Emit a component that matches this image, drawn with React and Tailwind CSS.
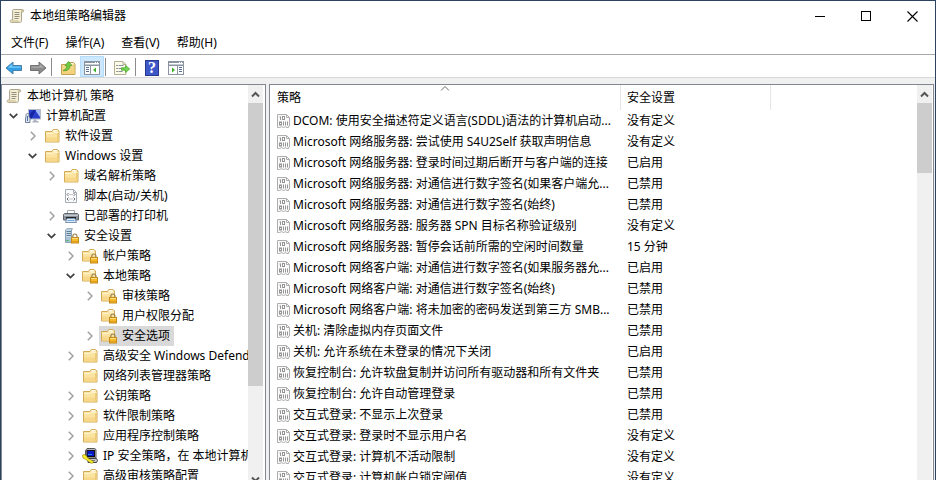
import React from 'react';

const svgBase = 'block shrink-0';

function Scroll() {
  return (
    <svg className={svgBase} width="16" height="16" viewBox="0 0 16 16" aria-hidden="true">
      <path d="M4.500 1.500h9c1.600 0 1.600 2.600 0 2.600h-1v8.400c0 1.200-.6 2-1.800 2H2.400c-1.600 0-1.600-2.600 0-2.600h1.200V3c0-.9.3-1.500.9-1.500z" fill="#f5efd8" stroke="#a9a188" />
      <path d="M11.900 1.800v2.300h1.800c1.200 0 1.200-2.300-.2-2.300z" fill="#cfc4a0" />
      <path d="M2.400 12h7.200c.2 1 .5 1.800 1.200 2.300H2.400c-1.300 0-1.300-2.300 0-2.300z" fill="#ddd2ae" />
      <path d="M5.500 4.500h5M5.500 6.500h5M5.500 8.500h5M5.500 10.500h4" stroke="#938e7c" />
    </svg>
  );
}

function Lock() {
  return (
    <>
      <path d="M9.800 10V8.300a2.100 2.300 0 0 1 4.200 0V10" fill="none" stroke="#9a8350" strokeWidth="1.200" />
      <rect x="8.500" y="9.500" width="7" height="5.500" fill="#f5b92a" stroke="#c48a1c" />
      <path d="M9 10.500h6" stroke="#ffe07c" />
      <path d="M9 13.500h6" stroke="#e39f1e" />
    </>
  );
}

function Folder() {
  return (
    <svg className={svgBase} width="16" height="16" viewBox="0 0 16 16" aria-hidden="true">
      <path d="M1.500 3.500h6.500l1.200-2h4.300l1.500 1.500v11H1.500z" fill="#fbe3a2" stroke="#d3ab57" />
      <path d="M9.800 2h3.400v1.500H9z" fill="#fffdf0" />
      <path d="M2 5.500h6.500l1-1H14.500" fill="none" stroke="#fff3cc" />
      <path d="M2 9.500h12.500v4H2z" fill="#f7d789" />
      <path d="M13.500 5v8.500" stroke="#efcb74" />
    </svg>
  );
}

function LockedFolder() {
  return (
    <svg className={svgBase} width="16" height="16" viewBox="0 0 16 16" aria-hidden="true">
      <path d="M.5 3.500h6l1.200-2h4.300l1.500 1.500v10H.500z" fill="#fbe3a2" stroke="#d3ab57" />
      <path d="M8.300 2h3.400v1.500H7.500z" fill="#fffdf0" />
      <path d="M1 5.500h6.500l1-1H13" fill="none" stroke="#fff3cc" />
      <path d="M1 8.500h12v4H1z" fill="#f7d789" />
      <Lock />
    </svg>
  );
}

function Computer() {
  return (
    <svg className={svgBase} width="16" height="16" viewBox="0 0 16 16" aria-hidden="true">
      <rect x="3.500" y="1.500" width="12" height="9.500" fill="#2a3ecb" stroke="#b4bcc8" />
      <path d="M10 2h5v7z" fill="#a3b8f3" />
      <path d="M4 6.500l5-4.500h2L6.500 10.500H4z" fill="#1524a4" />
      <path d="M8.500 11.500h3v1.500h2v1.500H7.500V13h1z" fill="#aab2bd" />
      <path d="M1 6.500l1.500-1.500L4 6.500v2L5 10v4.500H.500V10L1 8.500z" fill="#dfe5ec" stroke="#74819a" />
      <path d="M2.500 8v5" stroke="#4d6fa8" />
    </svg>
  );
}

function Script() {
  return (
    <svg className={svgBase} width="16" height="16" viewBox="0 0 16 16" aria-hidden="true">
      <path d="M2.500 1.500h8l3 3v10h-11z" fill="#fbfbfc" stroke="#a6acb4" />
      <path d="M10.500 1.500v3h3" fill="none" stroke="#a6acb4" />
      <path d="M5.500 5L4 6.500 5.500 8M10.500 5L12 6.500 10.500 8M5.500 9.500L4 11l1.500 1.500M10.500 9.500L12 11l-1.500 1.500" fill="none" stroke="#6a707a" />
      <path d="M6.500 6.500h3M6.500 11h3" stroke="#8a909a" strokeDasharray="1 1" />
    </svg>
  );
}

function Printer() {
  return (
    <svg className={svgBase} width="16" height="16" viewBox="0 0 16 16" aria-hidden="true">
      <path d="M4.500 2.500h7v4h-7z" fill="#fff" stroke="#a3a8ae" />
      <path d="M.5 6.500l1-1h13l1 1v5.500H.500z" fill="#8a939c" stroke="#5d656e" />
      <path d="M1 6.500h14v1.500H1z" fill="#c0c7cf" />
      <path d="M3 9h10v2H3z" fill="#20262c" />
      <path d="M4 10.500h8l1.500 4h-11z" fill="#dcebfa" stroke="#7c93ad" />
      <path d="M4.500 12.500h7" stroke="#76a8dc" />
    </svg>
  );
}

function SecureServer() {
  return (
    <svg className={svgBase} width="16" height="16" viewBox="0 0 16 16" aria-hidden="true">
      <path d="M2.500 2L4 .7h5.500l-1 1.300v12.500h-6z" fill="#c9dbe8" stroke="#8ba3b5" />
      <path d="M3.500 3.500H8M3.500 5.500H8M3.500 7.500H8" stroke="#5b7d96" />
      <path d="M3 9h5v5H3z" fill="#a9c2d4" />
      <path d="M3.500 12.500h2" stroke="#3dab52" />
      <Lock />
    </svg>
  );
}

function IpSecurity() {
  return (
    <svg className={svgBase} width="16" height="16" viewBox="0 0 16 16" aria-hidden="true">
      <path d="M3.500 2.500l1.500-2h7.500l1.500 1v8.500h-10.500z" fill="#b9b9b9" stroke="#555" />
      <rect x="5" y="2.500" width="7.500" height="6" fill="#0a17c8" stroke="#111" />
      <path d="M6 6.500h4" stroke="#2e88e8" />
      <path d="M6 10.500h8.500l1 2-1 2H6z" fill="#c6c6c6" stroke="#444" />
      <path d="M9 12.500h4" stroke="#777" />
      <path d="M.5 7l2-.5L5 8.500l.5 1.500 6 3.500-.5 1.500-2 .3L4 11.500 1 10z" fill="#ffee2e" stroke="#857a00" strokeWidth=".6" />
    </svg>
  );
}

function PolicyItem() {
  return (
    <svg className={svgBase} width="13" height="14" viewBox="0 0 13 14" aria-hidden="true">
      <path d="M.5 .5h9l3 3v8.500l-1 .3v1.200h-1.500l-1.500-.8-2 .8-2-.8-2 .8H.500z" fill="#fafafa" stroke="#adadad" />
      <path d="M9.500 .5v3h3" fill="none" stroke="#adadad" />
      <path d="M3.500 2.500v3.500M2.500 3h1M6.500 7.500v4M10.500 7.500v4" stroke="#959595" />
      <rect x="5.500" y="2.500" width="2" height="3" fill="none" stroke="#959595" />
      <rect x="2.500" y="8" width="2" height="3" fill="none" stroke="#959595" />
      <path d="M8.500 7.500v4" stroke="#959595" />
    </svg>
  );
}

function Arrow({ back }) {
  return (
    <svg className={svgBase} width="18" height="16" viewBox="0 0 18 16" aria-hidden="true">
      {back ? (
        <>
          <path d="M1 8l7-6v3.500h8.500v5H8V14z" fill="#2f9fe8" stroke="#4a7ea3" />
          <path d="M2.800 7.700L7.200 4v2.400h8.500v1.300z" fill="#77cbf8" />
        </>
      ) : (
        <>
          <path d="M17 8l-7-6v3.500H1.500v5H10V14z" fill="#8b8b8b" stroke="#717171" />
          <path d="M15.200 7.700L10.800 4v2.400H2.300v1.300z" fill="#acacac" />
        </>
      )}
    </svg>
  );
}

function FolderUp() {
  return (
    <svg className={svgBase} width="16" height="16" viewBox="0 0 16 16" aria-hidden="true">
      <path d="M1.500 4.500h6l1.500-2h4.500l1.500 1.500v10.500H1.500z" fill="#f3d788" stroke="#c3a252" />
      <path d="M9.500 3h4v1.500H8.500z" fill="#fff9e2" />
      <path d="M2 9h12.500v5H2z" fill="#f5d27c" />
      <path d="M3 10.500c3-1 3.800-2.700 3.800-5H5L8.500 1.500 12 5.500h-2c0 3.500-2.500 6-7 5z" fill="#6fcb3f" stroke="#4c9a2c" strokeWidth=".7" />
    </svg>
  );
}

function ConsoleWindow({ left }) {
  return (
    <svg className={svgBase} width="16" height="14" viewBox="0 0 16 14" aria-hidden="true">
      <rect x=".5" y=".5" width="15" height="13" fill="#fff" stroke="#8b94a1" />
      <path d="M1 1.500h14" stroke="#8b94a1" />
      <path d="M11 1.500h1M13 1.500h1" stroke="#fff" />
      <path d="M1 3.500h14" stroke="#c3c9d1" />
      <path d="M1 4.500h14" stroke="#8b94a1" />
      {left ? (
        <>
          <path d="M6.500 5v8" stroke="#8b94a1" />
          <path d="M2 6.500h3M2 8.500h3M2 10.500h3" stroke="#5b7090" />
          <path d="M12 6.500v5L9 9z" fill="#3fae2a" />
        </>
      ) : (
        <>
          <path d="M9.500 5v8" stroke="#8b94a1" />
          <path d="M11 6.500h3M11 8.500h3M11 10.500h3" stroke="#5b7090" />
          <path d="M4 6.500v5L7 9z" fill="#3fae2a" />
        </>
      )}
    </svg>
  );
}

function ExportList() {
  return (
    <svg className={svgBase} width="16" height="16" viewBox="0 0 16 16" aria-hidden="true">
      <path d="M.5 1.500h8.500l3 3v10H.500z" fill="#fdfbea" stroke="#b5af94" />
      <path d="M9 1.500v3h3" fill="none" stroke="#b5af94" />
      <path d="M2.500 5.500h1M2.500 8.500h1M2.500 11.500h1" stroke="#333" />
      <path d="M4.500 5.500h5M4.500 8.500h3M4.500 11.500h4" stroke="#8790a0" />
      <path d="M7.500 7.800h4V5.500L15.700 9l-4.200 3.500v-2.300h-4z" fill="#74d650" stroke="#4aa52f" strokeWidth=".8" />
    </svg>
  );
}

function Chevron({ open }) {
  return open ? (
    <svg className={svgBase} width="9" height="6" viewBox="0 0 9 6" aria-hidden="true">
      <path d="M.7 .8l3.800 3.800L8.300 .8" fill="none" stroke="#404040" strokeWidth="1.700" />
    </svg>
  ) : (
    <svg className={svgBase} width="6" height="10" viewBox="0 0 6 10" aria-hidden="true">
      <path d="M.8 .8L5 5 .8 9.200" fill="none" stroke="#a0a0a0" strokeWidth="1.500" />
    </svg>
  );
}

const tree = {
  label: '本地计算机 策略',
  icon: Scroll,
  children: [
    {
      label: '计算机配置',
      icon: Computer,
      open: true,
      children: [
        { label: '软件设置', icon: Folder, open: false },
        {
          label: 'Windows 设置',
          icon: Folder,
          open: true,
          children: [
            { label: '域名解析策略', icon: Folder, open: false },
            { label: '脚本(启动/关机)', icon: Script },
            { label: '已部署的打印机', icon: Printer, open: false },
            {
              label: '安全设置',
              icon: SecureServer,
              open: true,
              children: [
                { label: '帐户策略', icon: LockedFolder, open: false },
                {
                  label: '本地策略',
                  icon: LockedFolder,
                  open: true,
                  children: [
                    { label: '审核策略', icon: LockedFolder, open: false },
                    { label: '用户权限分配', icon: LockedFolder },
                    { label: '安全选项', icon: LockedFolder, open: false, selected: true },
                  ],
                },
                { label: '高级安全 Windows Defender', icon: Folder, open: false },
                { label: '网络列表管理器策略', icon: Folder },
                { label: '公钥策略', icon: Folder, open: false },
                { label: '软件限制策略', icon: Folder, open: false },
                { label: '应用程序控制策略', icon: Folder, open: false },
                { label: 'IP 安全策略，在 本地计算机', icon: IpSecurity, open: false },
                { label: '高级审核策略配置', icon: Folder, open: false },
              ],
            },
          ],
        },
      ],
    },
  ],
};

const policies = [
  ['DCOM: 使用安全描述符定义语言(SDDL)语法的计算机启动...', '没有定义'],
  ['Microsoft 网络服务器: 尝试使用 S4U2Self 获取声明信息', '没有定义'],
  ['Microsoft 网络服务器: 登录时间过期后断开与客户端的连接', '已启用'],
  ['Microsoft 网络服务器: 对通信进行数字签名(如果客户端允...', '已禁用'],
  ['Microsoft 网络服务器: 对通信进行数字签名(始终)', '已禁用'],
  ['Microsoft 网络服务器: 服务器 SPN 目标名称验证级别', '没有定义'],
  ['Microsoft 网络服务器: 暂停会话前所需的空闲时间数量', '15 分钟'],
  ['Microsoft 网络客户端: 对通信进行数字签名(如果服务器允...', '已启用'],
  ['Microsoft 网络客户端: 对通信进行数字签名(始终)', '已禁用'],
  ['Microsoft 网络客户端: 将未加密的密码发送到第三方 SMB...', '已禁用'],
  ['关机: 清除虚拟内存页面文件', '已禁用'],
  ['关机: 允许系统在未登录的情况下关闭', '已启用'],
  ['恢复控制台: 允许软盘复制并访问所有驱动器和所有文件夹', '已禁用'],
  ['恢复控制台: 允许自动管理登录', '已禁用'],
  ['交互式登录: 不显示上次登录', '已禁用'],
  ['交互式登录: 登录时不显示用户名', '没有定义'],
  ['交互式登录: 计算机不活动限制', '没有定义'],
  ['交互式登录: 计算机帐户锁定阈值', '没有定义'],
];

function TreeNode({ node, root }) {
  const Icon = node.icon;
  const expandable = node.open !== undefined;
  return (
    <li>
      <div className="flex h-5 items-center">
        {!root &&
          (expandable ? (
            <button type="button" aria-label={node.label} aria-expanded={node.open} className="flex h-5 w-[18px] shrink-0 items-center justify-center pr-px">
              <Chevron open={node.open} />
            </button>
          ) : (
            <span className="w-[18px] shrink-0" />
          ))}
        <button
          type="button"
          className={`flex h-5 shrink-0 items-center gap-[5px] whitespace-nowrap pl-0.5 pr-1 ${node.selected ? 'bg-[#d9d9d9]' : ''}`}
        >
          <Icon />
          {node.label}
        </button>
      </div>
      {node.children && (
        <ul className={root ? 'pl-px' : 'pl-[19px]'}>
          {node.children.map((child) => (
            <TreeNode key={child.label} node={child} />
          ))}
        </ul>
      )}
    </li>
  );
}

function ScrollArrow({ down }) {
  return (
    <button type="button" aria-label={down ? '向下滚动' : '向上滚动'} className="flex h-[18px] w-full shrink-0 items-center justify-center bg-[#f0f0f0]">
      <svg className={svgBase} width="9" height="7" viewBox="0 0 9 7" aria-hidden="true">
        <path d={down ? 'M1 1.500l3.500 3.500L8 1.500' : 'M1 5.500l3.500-3.500L8 5.500'} fill="none" stroke="#555" strokeWidth="2" />
      </svg>
    </button>
  );
}

function ToolButton({ label, active, children }) {
  return (
    <button
      type="button"
      aria-label={label}
      aria-pressed={active}
      className={`flex h-[21px] w-6 shrink-0 items-center justify-center pt-0.5 ${active ? 'border border-[#b5dcfb] bg-[#cce8ff]' : ''}`}
    >
      {children}
    </button>
  );
}

function Separator() {
  return <span className="ml-px mr-1 mb-px h-[18px] w-px shrink-0 bg-[#8c8c8c]" />;
}

export default function App() {
  return (
    <div className="flex h-screen flex-col overflow-hidden border-x border-t border-[#2b4560] bg-white font-['Noto_Sans','Noto_Sans_CJK_SC',sans-serif] text-xs text-black">
      <header className="flex h-[30px] shrink-0 items-center gap-[5px] pl-2">
        <Scroll />
        <h1 className="flex-1">本地组策略编辑器</h1>
        <div className="flex">
          <button type="button" aria-label="最小化" className="flex h-[30px] w-[46px] items-center justify-center">
            <svg width="11" height="11" viewBox="0 0 11 11"><path d="M0 5.500h10" stroke="#000" /></svg>
          </button>
          <button type="button" aria-label="最大化" className="flex h-[30px] w-[46px] items-center justify-center">
            <svg width="11" height="11" viewBox="0 0 11 11"><rect x=".5" y=".5" width="9" height="9" fill="none" stroke="#000" /></svg>
          </button>
          <button type="button" aria-label="关闭" className="flex h-[30px] w-[46px] items-center justify-center">
            <svg width="11" height="11" viewBox="0 0 11 11"><path d="M.5 .5l10 10M10.500 .5l-10 10" stroke="#000" strokeWidth="1.100" /></svg>
          </button>
        </div>
      </header>

      <nav className="flex h-6 shrink-0 items-center gap-[17px] border-b border-[#a8a8a8] pl-2.5">
        {['文件(F)', '操作(A)', '查看(V)', '帮助(H)'].map((item) => (
          <button key={item} type="button">
            {item}
          </button>
        ))}
      </nav>

      <div role="toolbar" className="flex h-[23px] shrink-0 items-end border-b border-[#d8d8d8] pl-px">
        <ToolButton label="后退"><Arrow back /></ToolButton>
        <ToolButton label="前进"><Arrow /></ToolButton>
        <Separator />
        <ToolButton label="上一级"><FolderUp /></ToolButton>
        <ToolButton label="显示/隐藏控制台树" active><ConsoleWindow left /></ToolButton>
        <Separator />
        <ToolButton label="导出列表"><ExportList /></ToolButton>
        <Separator />
        <ToolButton label="帮助">
          <span className="flex h-4 w-[14px] items-center justify-center border border-[#26398c] bg-[#3e58c9] font-['Liberation_Serif',serif] text-base font-bold leading-none text-white">?</span>
        </ToolButton>
        <ToolButton label="显示/隐藏操作窗格"><ConsoleWindow /></ToolButton>
      </div>

      <main className="flex min-h-0 flex-1 gap-[3px] overflow-hidden bg-[#f0f0f0] pt-1.5">
        <aside className="-mb-2 flex w-[265px] shrink-0 border-x border-t border-[#82868f] bg-white">
          <div className="min-w-0 flex-1 overflow-hidden pt-px">
            <ul className="pl-0.5">
              <TreeNode node={tree} root />
            </ul>
          </div>
          <div className="mr-0.5 flex w-[15px] shrink-0 flex-col bg-[#f0f0f0]">
            <ScrollArrow />
            <div className="h-[283px] bg-[#cdcdcd]" />
            <div className="flex-1" />
            <ScrollArrow down />
          </div>
        </aside>

        <section className="mr-px flex min-w-0 flex-1 border-x border-t border-[#82868f] bg-white">
          <div className="min-w-0 flex-1 overflow-hidden">
            <table className="w-full table-fixed border-separate border-spacing-0 text-left">
              <colgroup>
                <col className="w-[351px]" />
                <col className="w-[150px]" />
                <col />
              </colgroup>
              <thead>
                <tr className="h-[25px]">
                  <th scope="col" className="relative border-r border-[#e5e5e5] p-0 pl-[7px] font-normal">
                    策略
                    <svg className="absolute left-1/2 top-px -translate-x-1/2" width="9" height="5" viewBox="0 0 9 5" aria-hidden="true">
                      <path d="M.5 4.500l4-4 4 4" fill="none" stroke="#6b6b6b" />
                    </svg>
                  </th>
                  <th scope="col" className="border-r border-[#e5e5e5] p-0 pl-1.5 font-normal">安全设置</th>
                  <td className="p-0" />
                </tr>
              </thead>
              <tbody>
                {policies.map(([name, value]) => (
                  <tr key={name} className="h-[21px]">
                    <td className="p-0 pl-[7px]">
                      <div className="flex items-center gap-[3px] overflow-hidden whitespace-nowrap">
                        <PolicyItem />
                        {name}
                      </div>
                    </td>
                    <td className="p-0 pl-1.5">{value}</td>
                    <td className="p-0" />
                  </tr>
                ))}
              </tbody>
            </table>
          </div>
          <div className="mr-px flex w-[15px] shrink-0 flex-col bg-[#f0f0f0]">
            <ScrollArrow />
            <div className="h-[70px] bg-[#cdcdcd]" />
          </div>
        </section>
      </main>
    </div>
  );
}
